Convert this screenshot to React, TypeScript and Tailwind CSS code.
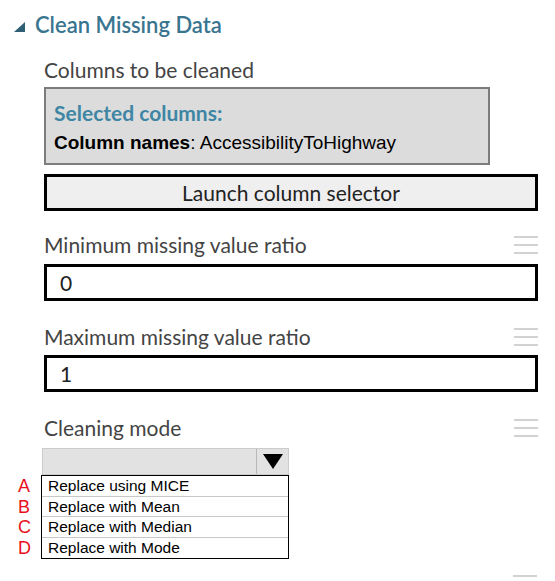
import React from 'react';

const Hamburger = () => (
  <div className="flex flex-col gap-[6px] w-[24px]">
    <div className="h-[2px] bg-[#d2d2d2]" />
    <div className="h-[2px] bg-[#d2d2d2]" />
    <div className="h-[2px] bg-[#d2d2d2]" />
  </div>
);

const FieldLabel = ({ text, className }: { text: string; className?: string }) => (
  <div className={'flex items-center justify-between h-[26px] ' + (className || '')}>
    <span className="text-[21px] leading-[26px] text-[#444444]">{text}</span>
    <Hamburger />
  </div>
);

const options = [
  { letter: 'A', label: 'Replace using MICE' },
  { letter: 'B', label: 'Replace with Mean' },
  { letter: 'C', label: 'Replace with Median' },
  { letter: 'D', label: 'Replace with Mode' },
];

export default function App() {
  return (
    <div className="w-[555px] h-[581px] bg-white overflow-hidden font-['Lato',sans-serif]">
      {/* Section header */}
      <div className="flex items-center h-[30px] mt-[10px] pl-[14px]">
        <svg width="11" height="10" viewBox="0 0 11 10" className="mt-[3px]">
          <polygon points="11,0 11,10 0,10" fill="#2f5f74" />
        </svg>
        <span className="ml-[10px] text-[22px] leading-[30px] font-semibold text-[#3a7590]">
          Clean Missing Data
        </span>
      </div>

      <div className="pl-[44px] w-[538px]">
        <div className="h-[26px] mt-[17px] text-[21px] leading-[26px] text-[#444444]">
          Columns to be cleaned
        </div>

        {/* Selected columns box */}
        <div className="mt-[4px] w-[446px] h-[78px] border-2 border-[#7c7c7c] bg-[#dcdcdc] pl-[8px] pt-[12px]">
          <div className="text-[21px] leading-[24px] font-bold text-[#3f86a5]">Selected columns:</div>
          <div className="mt-[7px] font-['Liberation_Sans',Arial,sans-serif] text-[19px] leading-[22px] text-black">
            <span className="font-bold">Column names</span>: AccessibilityToHighway
          </div>
        </div>

        <div className="mt-[9px] h-[37px] border-[3px] border-black bg-[#efefef] flex items-center justify-center text-[21px] text-[#222222]">
          Launch column selector
        </div>

        <FieldLabel text="Minimum missing value ratio" className="mt-[21px]" />
        <div className="mt-[6px] h-[37px] border-[3px] border-black bg-white flex items-center pl-[13px] text-[21px] text-[#222222]">
          0
        </div>

        <FieldLabel text="Maximum missing value ratio" className="mt-[23px]" />
        <div className="mt-[5px] h-[37px] border-[3px] border-black bg-white flex items-center pl-[13px] text-[21px] text-[#222222]">
          1
        </div>

        <FieldLabel text="Cleaning mode" className="mt-[23px]" />
      </div>

      {/* Dropdown */}
      <div className="mt-[7px] ml-[42px] w-[247px] h-[27px] flex bg-[#e2e2e2] border border-[#cccccc]">
        <div className="flex-1" />
        <div className="w-[32px] border-l border-[#b8b8b8] flex items-center justify-center">
          <svg width="20" height="15" viewBox="0 0 20 15">
            <polygon points="0,0 20,0 10,15" fill="#000000" />
          </svg>
        </div>
      </div>

      <div className="flex font-['Liberation_Sans',Arial,sans-serif]">
        <div className="w-[41px] flex flex-col pt-[1px]">
          {options.map((o) => (
            <div key={o.letter} className="h-[20.5px] pl-[18px] text-[18px] leading-[20px] text-[#e8101c]">
              {o.letter}
            </div>
          ))}
        </div>
        <div className="w-[248px] border border-black bg-white">
          {options.map((o, i) => (
            <div
              key={o.label}
              className={
                'h-[20.5px] pl-[6px] text-[15.5px] leading-[20px] text-black ' +
                (i < options.length - 1 ? 'border-b border-[#c8c8c8]' : '')
              }
            >
              {o.label}
            </div>
          ))}
        </div>
      </div>

      <div className="ml-[513px] mt-[16px] w-[24px] h-[2px] bg-[#d2d2d2]" />
    </div>
  );
}
